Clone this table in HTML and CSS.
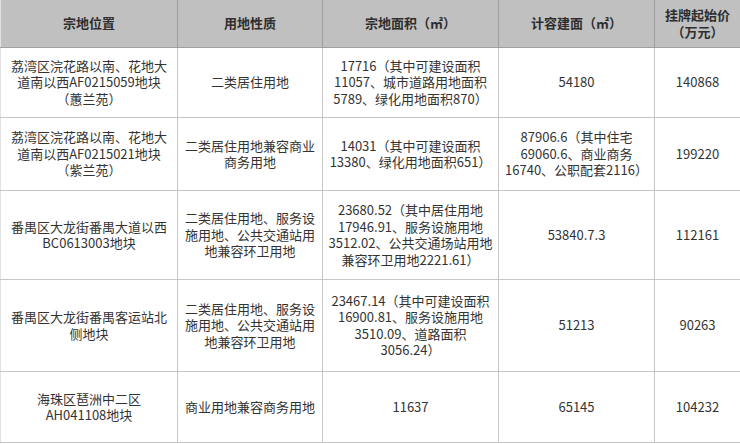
FILE: index.html
```html
<!DOCTYPE html>
<html lang="zh-CN">
<head>
<meta charset="utf-8">
<title>地块</title>
<link rel="stylesheet" href="styles.css">
</head>
<body>
<table class="land">
  <colgroup>
    <col class="c1"><col class="c2"><col class="c3"><col class="c4"><col class="c5">
  </colgroup>
  <thead>
    <tr class="head">
      <th>宗地位置</th>
      <th>用地性质</th>
      <th>宗地面积（㎡）</th>
      <th>计容建面（㎡）</th>
      <th>挂牌起始价<br>（万元）</th>
    </tr>
  </thead>
  <tbody>
    <tr class="r1">
      <td>荔湾区浣花路以南、花地大<br>道南以西AF0215059地块<br>（蕙兰苑）</td>
      <td>二类居住用地</td>
      <td>17716（其中可建设面积<br>11057、城市道路用地面积<br>5789、绿化用地面积870）</td>
      <td>54180</td>
      <td>140868</td>
    </tr>
    <tr class="r2">
      <td>荔湾区浣花路以南、花地大<br>道南以西AF0215021地块<br>（紫兰苑）</td>
      <td>二类居住用地兼容商业<br>商务用地</td>
      <td>14031（其中可建设面积<br>13380、绿化用地面积651）</td>
      <td>87906.6（其中住宅<br>69060.6、商业商务<br>16740、公职配套2116）</td>
      <td>199220</td>
    </tr>
    <tr class="r3">
      <td>番禺区大龙街番禺大道以西<br>BC0613003地块</td>
      <td>二类居住用地、服务设<br>施用地、公共交通站用<br>地兼容环卫用地</td>
      <td>23680.52（其中居住用地<br>17946.91、服务设施用地<br>3512.02、公共交通场站用地<br>兼容环卫用地2221.61）</td>
      <td>53840.7.3</td>
      <td>112161</td>
    </tr>
    <tr class="r4">
      <td>番禺区大龙街番禺客运站北<br>侧地块</td>
      <td>二类居住用地、服务设<br>施用地、公共交通站用<br>地兼容环卫用地</td>
      <td>23467.14（其中可建设面积<br>16900.81、服务设施用地<br>3510.09、道路面积<br>3056.24）</td>
      <td>51213</td>
      <td>90263</td>
    </tr>
    <tr class="r5">
      <td>海珠区琶洲中二区<br>AH041108地块</td>
      <td>商业用地兼容商务用地</td>
      <td>11637</td>
      <td>65145</td>
      <td>104232</td>
    </tr>
  </tbody>
</table>
</body>
</html>
```

FILE: styles.css
```css
html, body {
  margin: 0;
  padding: 0;
  background: #ffffff;
}

.land {
  width: 740px;
  table-layout: fixed;
  border-collapse: collapse;
  font-family: "Noto Sans CJK SC", "Noto Sans", sans-serif;
  font-size: 13px;
  line-height: 16.5px;
  color: #333333;
  border-left: 1px solid #e2e2e2;
  border-right: 1px solid #b8b8b8;
}

.c1 { width: 177px; }
.c2 { width: 145px; }
.c3 { width: 176px; }
.c4 { width: 156px; }
.c5 { width: 86px; }

.land th,
.land td {
  padding: 0 2px;
  text-align: center;
  vertical-align: middle;
  white-space: nowrap;
}

.land th {
  background: #c0c0c0;
  font-weight: bold;
  color: #2e2e2e;
  height: 47px;
  border-left: 1px solid #9e9e9e;
  border-bottom: 1px solid #a0a0a0;
}

.land td {
  border-left: 1px solid #c6c6c6;
  border-bottom: 1px solid #c6c6c6;
}

.land th:first-child,
.land td:first-child {
  border-left: none;
}

.r1 td { height: 69px; }
.r2 td { height: 72px; }
.r3 td { height: 88px; }
.r4 td { height: 91px; }
.r5 td { height: 70px; }
```
